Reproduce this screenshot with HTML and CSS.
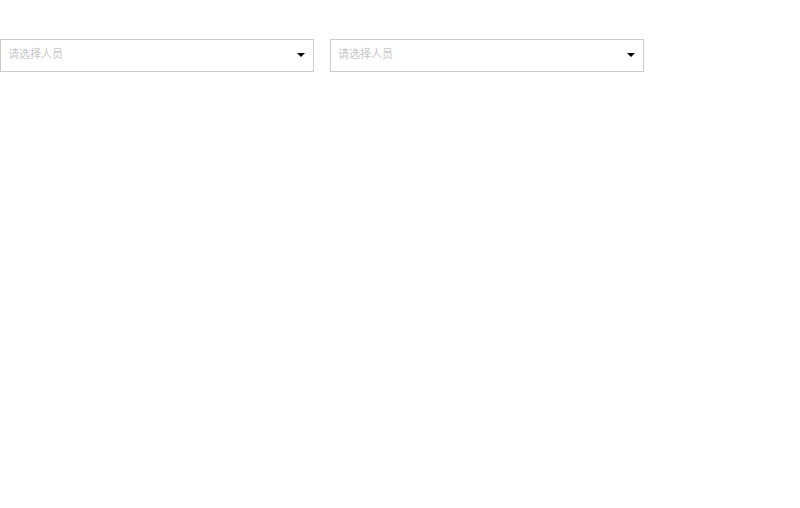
FILE: index.html
```html
<!DOCTYPE html>
<html lang="zh-CN">
<head>
  <meta charset="UTF-8">
  <meta name="viewport" content="width=device-width, initial-scale=1.0">
  <link rel="stylesheet" href="styles.css">
</head>

<body>
  <div class="content">
    <div class="select">
      <span class="placeholder">请选择人员</span>
      <span class="arrow"></span>
    </div>
    <div class="select">
      <span class="placeholder">请选择人员</span>
      <span class="arrow"></span>
    </div>
  </div>
</body>

</html>
```

FILE: styles.css
```css
body {
  margin: 0;
  font-family: "Noto Sans CJK SC", "Liberation Sans", sans-serif;
}

.content {
  display: flex;
  gap: 16px;
  padding-top: 39px;
}

.select {
  box-sizing: border-box;
  width: 314px;
  height: 33px;
  border: 1px solid #ccc;
  display: flex;
  align-items: center;
  justify-content: space-between;
  padding: 0 8px 0 8px;
  background: #fff;
}

.placeholder {
  font-size: 11px;
  line-height: 14px;
  color: #c8c8c8;
  margin-bottom: 5px;
  margin-left: -1px;
}

.arrow {
  width: 0;
  height: 0;
  border-left: 4px solid transparent;
  border-right: 4px solid transparent;
  border-top: 4px solid #000;
  margin-bottom: 1px;
}
```
